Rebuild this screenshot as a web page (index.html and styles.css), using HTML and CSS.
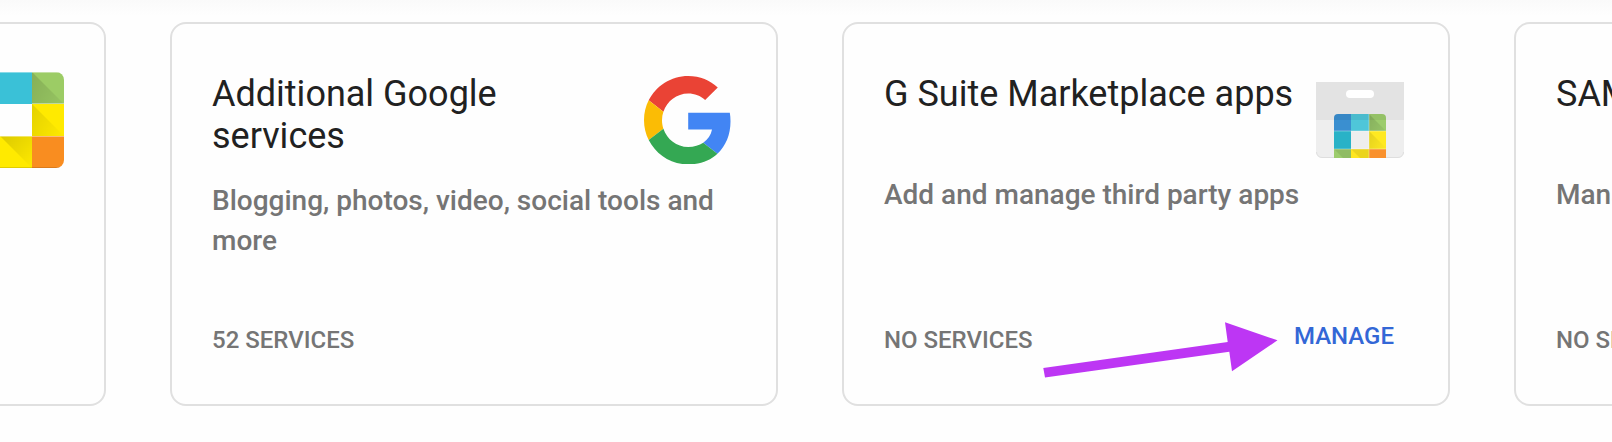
FILE: index.html
```html
<!DOCTYPE html>
<html lang="en">
<head>
<meta charset="utf-8">
<title>Apps</title>
<link rel="stylesheet" href="styles.css">
</head>
<body>
<main class="cards">
  <section class="card card-first">
    <svg class="suite-icon" width="96" height="96" viewBox="0 0 96 96">
      <defs>
        <clipPath id="round"><rect width="96" height="96" rx="8"/></clipPath>
        <linearGradient id="shade" x1="0" y1="0" x2="1" y2="1"><stop offset="0" stop-opacity=".14"/><stop offset=".95" stop-opacity="0.01"/></linearGradient>
      </defs>
      <g clip-path="url(#round)">
        <path fill="#3a8fd0" d="M0 0h32v32H0z"/><path fill="#3ac1d7" d="M32 0h32v32H32z"/><path fill="#9ccc65" d="M64 0h32v32H64z"/>
        <path fill="#26b0c8" d="M0 32h32v32H0z"/><path fill="#ffea00" d="M64 32h32v32H64z"/>
        <path fill="#9ccc65" d="M0 64h32v32H0z"/><path fill="#ffea00" d="M32 64h32v32H32z"/><path fill="#f98d20" d="M64 64h32v32H64z"/>
        <path fill="url(#shade)" d="M64 0l32 32H64zM64 32l32 32H64z"/><path fill="url(#shade)" d="M32 64h32v32z"/>
        <path fill="#fff" fill-opacity=".4" d="M0 0h96v1H0zM64 31h32v1H64zM32 64h64v1H32z"/><path fill-opacity=".12" d="M0 95h96v1H0z"/>
      </g>
    </svg>
  </section>

  <section class="card">
    <header class="card-head">
      <h2 class="title title-tall">Additional Google services</h2>
      <svg class="google-icon" width="88.4" height="88.4" viewBox="0 0 48 48">
        <path fill="#EA4335" d="M24 9.5c3.54 0 6.71 1.22 9.21 3.6l6.85-6.85C35.9 2.38 30.47 0 24 0 14.62 0 6.51 5.38 2.56 13.22l7.98 6.19C12.43 13.72 17.74 9.5 24 9.5z"/>
        <path fill="#4285F4" d="M46.98 24.55c0-1.57-.15-3.09-.38-4.55H24v9.02h12.94c-.58 2.96-2.26 5.48-4.78 7.18l7.73 6c4.51-4.18 7.09-10.36 7.09-17.65z"/>
        <path fill="#FBBC05" d="M10.53 28.59c-.48-1.45-.76-2.99-.76-4.59s.27-3.14.76-4.59l-7.98-6.19C.92 16.46 0 20.12 0 24c0 3.88.92 7.54 2.56 10.78l7.97-6.19z"/>
        <path fill="#34A853" d="M24 48c6.48 0 11.93-2.13 15.89-5.81l-7.73-6c-2.15 1.45-4.92 2.3-8.16 2.3-6.26 0-11.57-4.22-13.47-9.91l-7.98 6.19C6.51 42.62 14.62 48 24 48z"/>
      </svg>
    </header>
    <p class="desc">Blogging, photos, video, social tools and more</p>
    <footer class="card-foot"><span class="count">52 SERVICES</span></footer>
  </section>

  <section class="card">
    <header class="card-head">
      <h2 class="title">G Suite Marketplace apps</h2>
      <svg class="bag-icon" width="88" height="76" viewBox="0 0 88 76">
        <path fill="#eee" d="M0 38h88v32a6 6 0 0 1-6 6H6a6 6 0 0 1-6-6z"/>
        <path fill="#e3e3e3" d="M0 0h88v38H0z"/>
        <path fill="none" stroke="#dedede" d="M.5 70a5.5 5.5 0 0 0 5.500 5.500h76a5.500 5.500 0 0 0 5.500-5.500"/>
        <rect x="30" y="8" width="28" height="8" rx="4" fill="#fff"/>
        <path fill="#3a8fd0" d="M18 49V36a4 4 0 0 1 4-4h13v17z"/><path fill="#4fc6d9" d="M35 32h18v17H35z"/><path fill="#9ccc6c" d="M53 32h13a4 4 0 0 1 4 4v13H53z"/>
        <path fill="#29b2c7" d="M18 49h17v18H18z"/><path fill="#eee" d="M35 49h18v18H35z"/><path fill="#ffe921" d="M53 49h17v18H53z"/>
        <path fill="#9ccc6c" d="M18 67h17v9H18z"/><path fill="#ffe621" d="M35 67h18v9H35z"/><path fill="#f9912d" d="M53 67h17v9H53z"/>
        <path fill="url(#shade)" d="M53 32l17 17H53zM53 49l17 17v1H53z"/><path fill-opacity=".08" d="M18 67h17v9h-8zM35 67h18v9h-9z"/>
        <path fill-opacity=".05" d="M22 32h44a4 4 0 0 1 4 4v2H18v-2a4 4 0 0 1 4-4z"/>
        <path fill="#fff" fill-opacity=".35" d="M18 48.500h52v1H18zM18 66.500h52v1H18zM52.500 32h1v44h-1z"/>
      </svg>
    </header>
    <p class="desc">Add and manage third party apps</p>
    <footer class="card-foot"><span class="count">NO SERVICES</span><a class="manage">MANAGE</a></footer>
    <svg class="arrow" width="236" height="60" viewBox="1042 320 236 60">
      <path fill="#bd36f4" d="M1043.300 368L1227.700 342L1225 322.200L1277.500 340.300L1232 371.300L1229.300 351.700L1045 377.500Z"/>
    </svg>
  </section>

  <section class="card">
    <header class="card-head"><h2 class="title">SAML apps</h2></header>
    <p class="desc">Manage SSO and User Provisioning</p>
    <footer class="card-foot"><span class="count">NO SERVICES</span></footer>
  </section>
</main>
</body>
</html>
```

FILE: styles.css
```css
* { box-sizing: border-box; }
body {
  margin: 0;
  height: 442px;
  overflow: hidden;
  background: linear-gradient(#fafafa, #fefefe 16px, #fefefe);
  font-family: Roboto, sans-serif;
}
.cards {
  display: grid;
  grid-template-columns: repeat(4, 608px);
  gap: 64px;
  margin-left: -502px;
  padding-top: 22px;
}
.card {
  position: relative;
  display: flex;
  flex-direction: column;
  height: 384px;
  padding: 49px 40px 50px;
  border: 2px solid #e0e0e0;
  border-radius: 16px;
  background: #fefefe;
}
.card-first { align-items: flex-end; padding-top: 48px; }
.card-head {
  display: flex;
  justify-content: space-between;
  align-items: flex-start;
  height: 84px;
}
.title {
  margin: 0;
  min-height: 78px;
  font-size: 36px;
  font-weight: 400;
  line-height: 42px;
  color: #212121;
  white-space: nowrap;
}
.title-tall { width: 320px; white-space: normal; }
.google-icon { margin: 2.5px 4px 0 0; flex: none; }
.bag-icon { margin: 9px 4px 0 0; flex: none; }
.desc {
  margin: 24px 0 0;
  font-size: 28px;
  font-weight: 500;
  line-height: 40px;
  color: #757575;
}
.card-head:not(:has(.title-tall)) { height: 78px; }
.card-foot {
  display: flex;
  justify-content: space-between;
  align-items: flex-start;
  height: 32px;
  margin-top: auto;
  padding-right: 14px;
  font-size: 24px;
  font-weight: 500;
  line-height: 28px;
}
.count { color: #757575; padding-top: 4px; }
.manage { color: #3367d6; }
.arrow { position: absolute; left: 198px; top: 296px; }
```
